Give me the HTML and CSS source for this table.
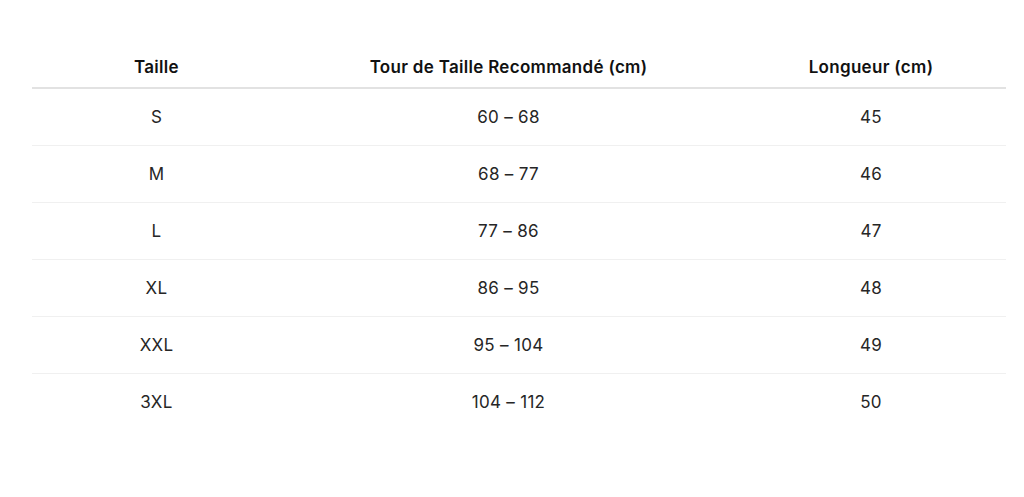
FILE: index.html
```html
<!DOCTYPE html>
<html lang="fr">
<head>
<meta charset="utf-8">
<title>Guide des tailles</title>
<link rel="stylesheet" href="styles.css">
</head>
<body>
<div class="wrap">
<table class="sizes">
  <colgroup>
    <col class="c1"><col class="c2"><col class="c3">
  </colgroup>
  <thead>
    <tr><th>Taille</th><th>Tour de Taille Recommandé (cm)</th><th>Longueur (cm)</th></tr>
  </thead>
  <tbody>
    <tr><td>S</td><td>60 – 68</td><td>45</td></tr>
    <tr><td>M</td><td>68 – 77</td><td>46</td></tr>
    <tr><td>L</td><td>77 – 86</td><td>47</td></tr>
    <tr><td>XL</td><td>86 – 95</td><td>48</td></tr>
    <tr><td>XXL</td><td>95 – 104</td><td>49</td></tr>
    <tr><td>3XL</td><td>104 – 112</td><td>50</td></tr>
  </tbody>
</table>
</div>
</body>
</html>
```
FILE: styles.css
```css
html, body {
  margin: 0;
  padding: 0;
  background: #ffffff;
}
body {
  font-family: Inter, "Noto Sans", "Liberation Sans", sans-serif;
  color: #222222;
  font-size: 17px;
  line-height: 24px;
  letter-spacing: 0.3px;
}
.wrap {
  padding: 47px 18px 0 32px;
}
.sizes {
  width: 974px;
  border-collapse: collapse;
  table-layout: fixed;
}
.c1 { width: 249px; }
.c2 { width: 455px; }
.c3 { width: 270px; }
.sizes th {
  font-weight: 600;
  color: #111111;
  padding: 8px 16px;
  text-align: center;
  border-bottom: 2px solid #e2e2e2;
}
.sizes td {
  text-align: center;
  padding: 16px;
  border-bottom: 1px solid #f0f0f0;
  color: #262626;
}
.sizes tbody tr:last-child td {
  border-bottom: none;
}
```
